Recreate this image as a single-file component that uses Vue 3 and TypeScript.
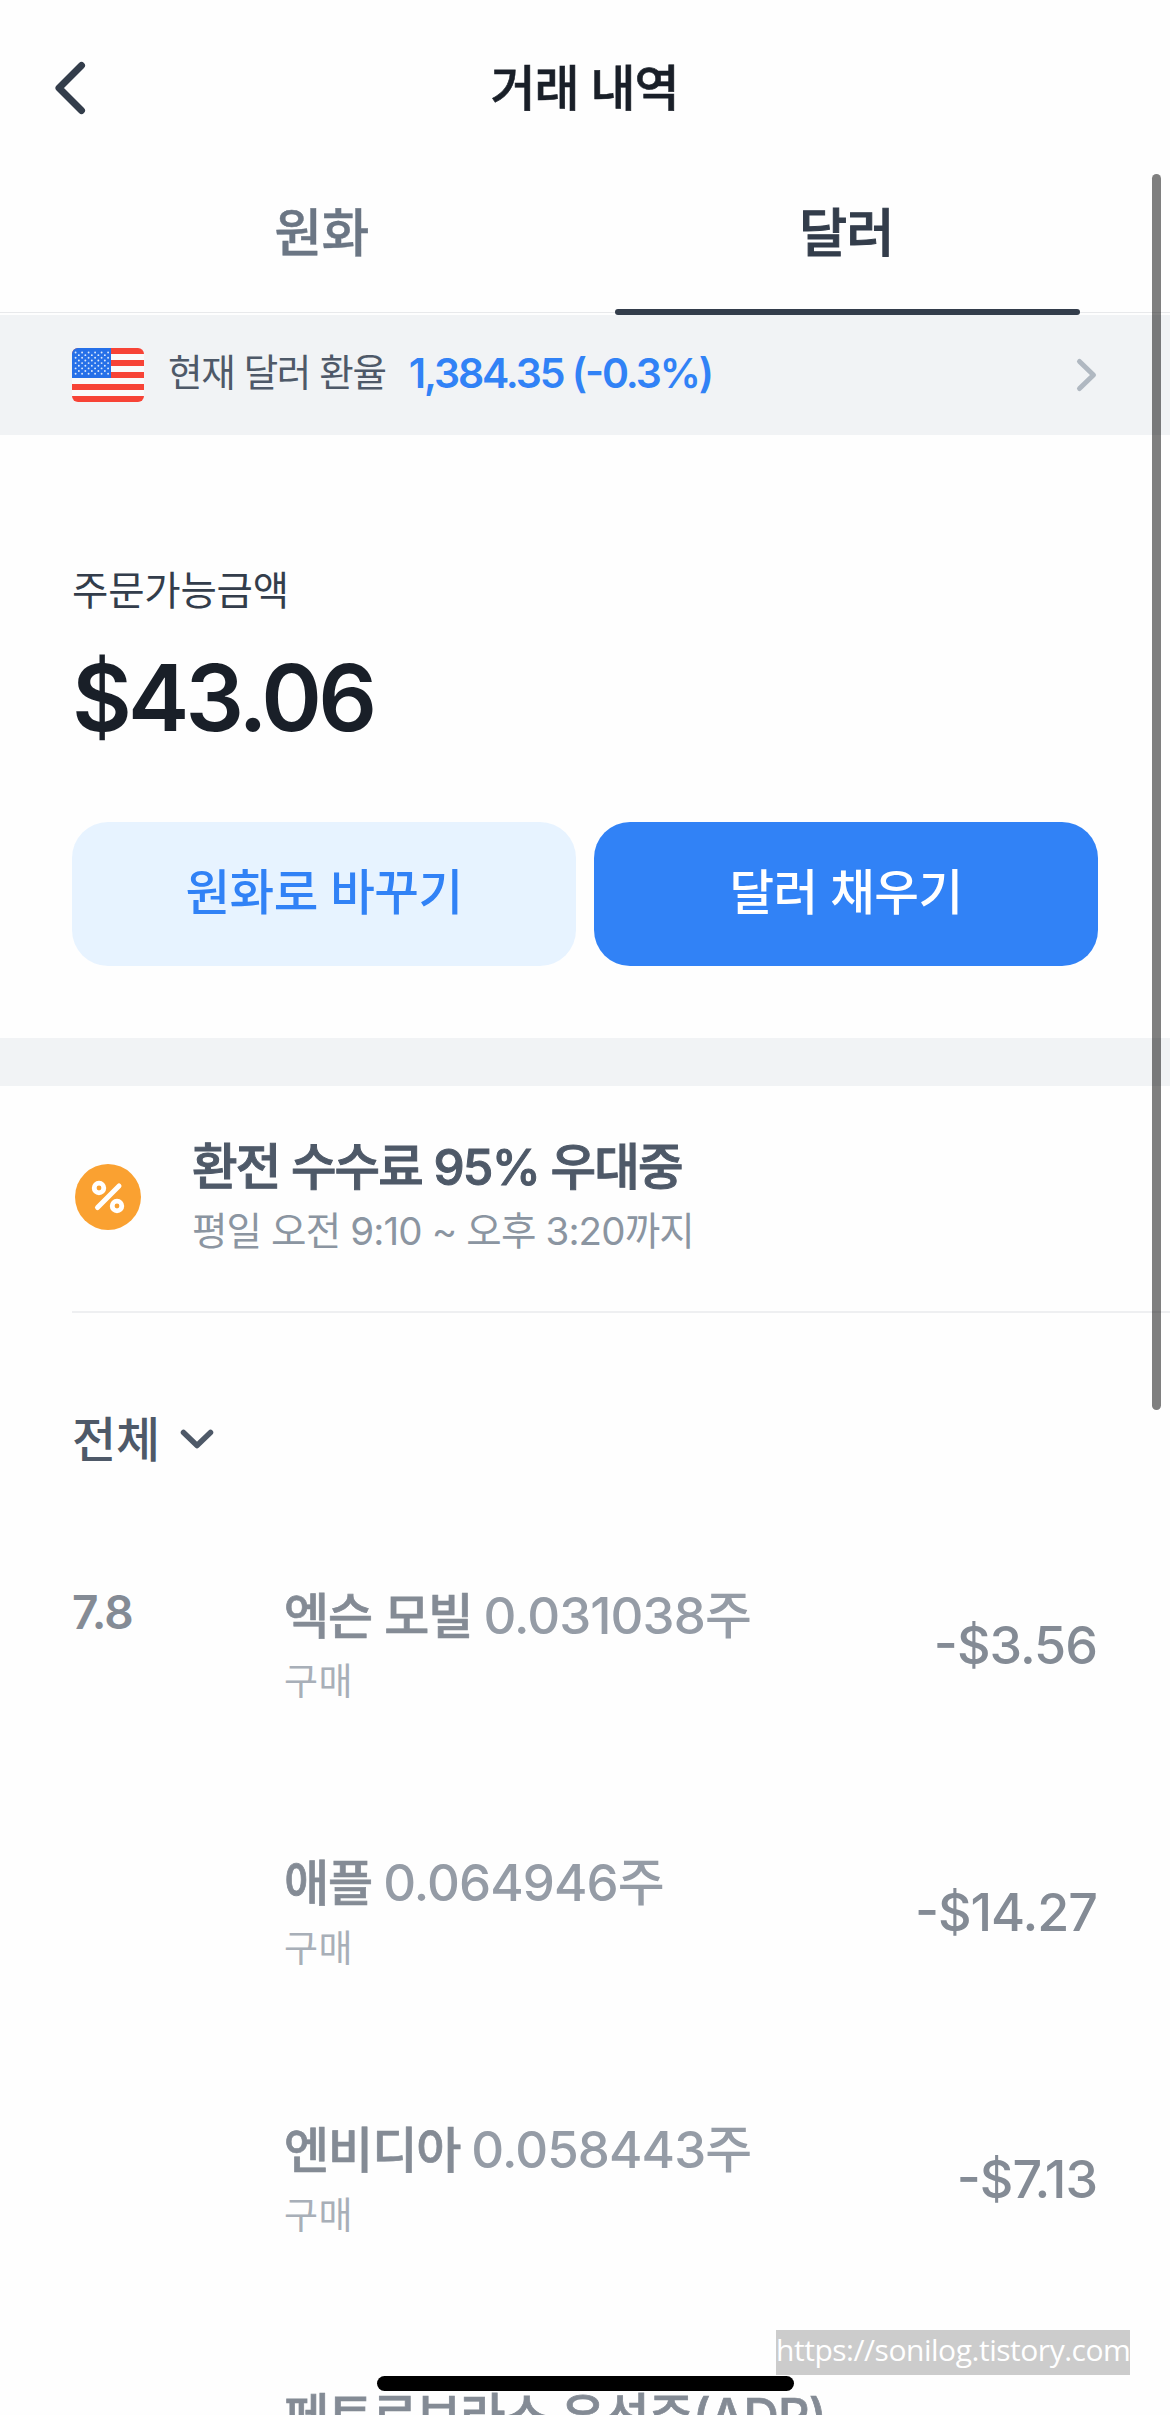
<script setup lang="ts">
interface Trade {
  date: string
  name: string
  quantity: string
  kind: string
  amount: string
}

const trades: Trade[] = [
  { date: '7.8', name: '엑슨 모빌', quantity: '0.031038주', kind: '구매', amount: '-$3.56' },
  { date: '', name: '애플', quantity: '0.064946주', kind: '구매', amount: '-$14.27' },
  { date: '', name: '엔비디아', quantity: '0.058443주', kind: '구매', amount: '-$7.13' },
  { date: '', name: '페트로브라스 우선주(ADR)', quantity: '', kind: '', amount: '' },
]

// Canton stars: nine rows alternating six and five
const stars: { x: number; y: number }[] = []
for (let r = 0; r < 9; r++) {
  const n = r % 2 === 0 ? 6 : 5
  for (let c = 0; c < n; c++) stars.push({ x: 3.6 + c * 6.5 + (r % 2 ? 3.25 : 0), y: 4.5 + r * 2.65 })
}
</script>

<template>
  <div class="screen">
    <header class="bar">
      <svg class="back" width="36" height="60" viewBox="0 0 36 60" fill="none"><path d="M29.500 8.500 L7 31 L29.500 53.500" stroke="#333d4b" stroke-width="7" stroke-linecap="round" stroke-linejoin="round" /></svg>
      <h1>거래 내역</h1>
    </header>
    <nav class="tabs">
      <div class="tab">원화</div>
      <div class="tab on">달러</div>
    </nav>
    <section class="rate">
      <svg class="flag" width="72" height="54" viewBox="0 0 72 54">
        <defs><clipPath id="flagClip"><rect width="72" height="54" rx="6" /></clipPath></defs>
        <g clip-path="url(#flagClip)">
          <rect width="72" height="54" fill="#fafafa" />
          <rect v-for="i in 5" :key="i" :y="(i - 1) * 12" width="72" height="6" fill="#f74336" />
          <rect width="39" height="30" fill="#2670e8" />
          <circle v-for="(s, i) in stars" :key="'s' + i" :cx="s.x" :cy="s.y" r="0.95" fill="#dbe8fb" />
        </g>
      </svg>
      <span class="rate-label">현재 달러 환율</span>
      <span class="rate-value">1,384.35 (<span class="sign">-</span>0.3%)</span>
      <svg class="go" width="24" height="36" viewBox="0 0 24 36" fill="none"><path d="M5.500 4.500 L19.500 18 L5.500 31.500" stroke="#b0b8c1" stroke-width="5" stroke-linecap="round" stroke-linejoin="round" /></svg>
    </section>
    <section class="balance">
      <div class="balance-label">주문가능금액</div>
      <div class="balance-value">$43.06</div>
      <div class="actions">
        <button class="btn light">원화로 바꾸기</button>
        <button class="btn solid">달러 채우기</button>
      </div>
    </section>
    <div class="band"></div>
    <section class="promo">
      <svg class="badge" width="66" height="66" viewBox="0 0 66 66" fill="none">
        <circle cx="33" cy="33" r="33" fill="#faa131" />
        <g stroke="#fff">
          <circle cx="24" cy="24" r="4.800" stroke-width="4.800" />
          <circle cx="42" cy="42" r="4.800" stroke-width="4.800" />
          <path d="M44 22 L22.500 43.500" stroke-width="5" stroke-linecap="round" />
        </g>
      </svg>
      <div class="promo-text">
        <div class="promo-title">환전 수수료 95% 우대중</div>
        <div class="promo-sub">평일 오전 9:10 ~ 오후 3:20까지</div>
      </div>
    </section>
    <div class="filter">
      <span>전체</span>
      <svg width="36" height="24" viewBox="0 0 36 24" fill="none"><path d="M4.500 4.500 L18 17.500 L31.500 4.500" stroke="#4e5968" stroke-width="5.500" stroke-linecap="round" stroke-linejoin="round" /></svg>
    </div>
    <ul class="trades">
      <li v-for="t in trades" :key="t.name" class="trade">
        <div class="date">{{ t.date }}</div>
        <div class="info">
          <div class="name"><span class="stock">{{ t.name }}</span><span v-if="t.quantity" class="qty">{{ t.quantity }}</span></div>
          <div v-if="t.kind" class="kind">{{ t.kind }}</div>
        </div>
        <div class="amount">{{ t.amount }}</div>
      </li>
    </ul>
    <div class="scrollbar"></div>
    <div class="home"></div>
    <div class="watermark">https://sonilog.tistory.com</div>
  </div>
</template>

<style>
html, body { margin: 0; background: #fefefe; }
</style>

<style scoped>
.screen { position: relative; width: 1170px; height: 2415px; overflow: hidden; background: #fefefe; color: #4e5968; font-family: Inter, "Noto Sans CJK KR", sans-serif; white-space: nowrap; }
h1, ul, li, button { margin: 0; padding: 0; font: inherit; list-style: none; border: 0; }
.bar { display: grid; grid-template-columns: 174px 1fr 174px; align-items: center; height: 174px; box-sizing: border-box; }
.back { margin-left: 52px; }
h1 { padding: 4px 1px 0 0; text-align: center; color: #191f28; font-size: 49px; line-height: 60px; font-weight: 500; letter-spacing: -1.1px; -webkit-text-stroke: 0.6px; }
.tabs { display: grid; grid-template-columns: 525px 525px; justify-content: center; height: 141px; background: linear-gradient(#e8e9eb, #e8e9eb) 0 138px / 100% 1px no-repeat; }
.tab { position: relative; display: flex; justify-content: center; box-sizing: border-box; height: 141px; padding: 30px 2px 0 0; color: #6b7684; font-size: 52px; line-height: 60px; font-weight: 500; letter-spacing: -0.6px; -webkit-text-stroke: 0.4px; }
.tab.on { color: #333d4b; -webkit-text-stroke: 1px; }
.tab.on::after { content: ''; position: absolute; left: 30px; bottom: 0; width: 465px; height: 6px; border-radius: 3px; background: #333d4b; }
.rate { display: flex; align-items: center; height: 120px; padding: 0 72px; background: #f1f3f5; }
.flag { display: block; }
.rate-label { margin-left: 24px; padding-bottom: 4px; font-size: 37.5px; line-height: 50px; letter-spacing: -1.3px; }
.rate-value { margin-left: 23px; padding-bottom: 4px; color: #3182f6; font-size: 41px; line-height: 50px; font-weight: 600; letter-spacing: -2.1px; }
.sign, .amount { font-feature-settings: "case"; }
.go { margin-left: auto; }
.balance { height: 603px; box-sizing: border-box; padding: 129px 72px 0; }
.balance-label { color: #333d4b; font-size: 39.5px; line-height: 54px; letter-spacing: -0.2px; }
.balance-value { margin-top: 20px; color: #191f28; font-size: 92px; line-height: 120px; font-weight: 600; letter-spacing: -3.8px; }
.actions { display: grid; grid-template-columns: 1fr 1fr; gap: 18px; margin-top: 64px; }
.btn { height: 144px; padding-bottom: 2px; border-radius: 36px; font-size: 48.5px; line-height: 60px; font-weight: 500; letter-spacing: -0.5px; }
.light { color: #3182f6; background: #e7f3ff; }
.solid { color: #fff; background: #3182f6; }
.band { height: 48px; background: #f1f3f5; }
.promo { display: flex; align-items: flex-start; height: 227px; box-sizing: border-box; margin-left: 72px; padding: 50px 0 0 3px; border-bottom: 2px solid #eeeff1; }
.badge { display: block; margin-top: 28px; }
.promo-text { margin-left: 51px; }
.promo-title { padding-top: 1px; font-size: 49.5px; line-height: 60px; font-weight: 500; letter-spacing: -1.8px; -webkit-text-stroke: 1px; }
.promo-sub { margin-top: 9px; color: #8b95a1; font-size: 38.5px; line-height: 50px; letter-spacing: -0.85px; }
.filter { display: flex; align-items: center; height: 60px; padding: 97px 0 0 72px; font-size: 48px; line-height: 60px; font-weight: 500; letter-spacing: -0.2px; }
.filter svg { margin-left: 19px; }
.trades { margin-top: 116px; }
.trade { display: flex; height: 267px; }
.date { width: 212px; margin: -4px 0 0 72px; color: #848b95; font-size: 46px; line-height: 60px; font-weight: 600; letter-spacing: -1px; }
.info { flex: 1; }
.name { font-size: 49px; line-height: 60px; letter-spacing: -1px; }
.stock { color: #848b95; font-weight: 500; -webkit-text-stroke: 0.7px; }
.qty { margin-left: 11px; color: #959ca6; font-size: 51px; font-weight: 500; letter-spacing: -0.9px; }
.kind { margin-top: 10px; color: #a8afb8; font-size: 37px; line-height: 50px; letter-spacing: 0.5px; }
.date + .info { margin-right: -284px; }
.amount { padding: 30px 73px 0 0; margin-left: auto; color: #848b95; font-size: 52px; line-height: 60px; font-weight: 500; letter-spacing: -1px; }
.scrollbar { position: absolute; left: 1152px; top: 174px; width: 9px; height: 1236px; border-radius: 5px; background: rgba(0, 0, 0, 0.5); }
.home { position: absolute; left: 377px; top: 2376px; width: 417px; height: 15px; border-radius: 8px; background: #000; }
.watermark { position: absolute; left: 776px; top: 2330px; width: 354px; height: 45px; background: #ccc; color: #fff; font: 30px/40px "Open Sans", "Noto Sans", sans-serif; letter-spacing: -0.47px; }
</style>
